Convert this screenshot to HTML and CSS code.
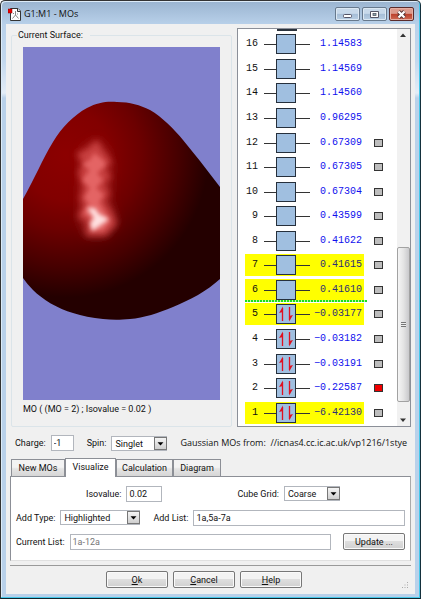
FILE: index.html
```html
<!DOCTYPE html>
<html lang="en">
<head>
<meta charset="utf-8">
<title>G1:M1 - MOs</title>
<link rel="stylesheet" href="styles.css">
</head>
<body>
<div class="window">
  <header class="titlebar">
    <svg class="app-icon" viewBox="0 0 13 13" width="13" height="13" aria-hidden="true">
      <path d="M2.500 .5H10L12.500 3V12.500H2.500Z" fill="#fff" stroke="#333"/>
      <path d="M9.500 .5V3.500H12.500" fill="#ddd" stroke="#333"/>
      <path d="M7.500 3V7L4.500 10.500M7.500 7L10.500 10.500M5 5.500H6M9 6H10" fill="none" stroke="#888"/>
      <rect x="0" y="1" width="4" height="4" fill="#e80000" stroke="#800" stroke-width=".5"/>
    </svg>
    <h1>G1:M1 - MOs</h1>
    <div class="window-buttons">
      <button type="button" aria-label="Minimize"><svg viewBox="0 0 11 9" width="11" height="9"><rect x="1.500" y="4.500" width="8" height="3" rx="1" fill="#fff" stroke="#556"/></svg></button>
      <button type="button" aria-label="Maximize"><svg viewBox="0 0 11 9" width="11" height="9"><path d="M1.500 1.500H9.500V7.500H1.500Z" fill="#fff" stroke="#556"/><rect x="4" y="3.500" width="3" height="2" fill="#8aa" stroke="#556" stroke-width=".8"/></svg></button>
      <button type="button" class="close" aria-label="Close"><svg viewBox="0 0 11 9" width="11" height="9"><path d="M2.500 1.500L8.500 7.500M8.500 1.500L2.500 7.500" stroke="#533" stroke-width="4"/><path d="M2.500 1.500L8.500 7.500M8.500 1.500L2.500 7.500" stroke="#fff" stroke-width="2.200"/></svg></button>
    </div>
  </header>

  <main class="client">
    <div class="top">
      <fieldset class="surface">
        <legend>Current Surface:</legend>
        <svg class="view" viewBox="23 47 197 353" preserveAspectRatio="xMidYMid slice" role="img" aria-label="Orbital surface">
          <defs>
            <radialGradient id="shade" gradientUnits="userSpaceOnUse" cx="66" cy="155" r="150">
              <stop offset="0" stop-color="#8c0000"/>
              <stop offset=".3" stop-color="#820000"/>
              <stop offset=".5" stop-color="#6c0000"/>
              <stop offset=".75" stop-color="#460000"/>
              <stop offset=".95" stop-color="#240000"/>
            </radialGradient>
            <filter id="wide" x="-50%" y="-50%" width="200%" height="200%"><feGaussianBlur stdDeviation="5"/></filter>
            <filter id="soft" x="-50%" y="-50%" width="200%" height="200%"><feGaussianBlur stdDeviation="3"/></filter>
            <filter id="fine" x="-50%" y="-50%" width="200%" height="200%"><feGaussianBlur stdDeviation="2"/></filter>
          </defs>
          <rect x="23" y="47" width="197" height="353" fill="#8080cc"/>
          <path fill="url(#shade)" d="M23 199C34 180 43 158 53 142C62 127 74 115 87 108C98 102 108 101 117 102C130 102 140 105 150 110C162 117 174 129 183 140L200 161L220 187V279C207 291 190 300 173 307C158 313 144 318 130 319C120 320 112 320 103 319C92 318 82 316 73 313C58 309 42 299 33 290Q27 284 23 278Z"/>
          <path filter="url(#wide)" fill="#b83434" fill-opacity=".6" d="M97 138L108 150L112 165L110 200L117 222L106 236H86L79 220L80 150Z"/>
          <path filter="url(#soft)" fill="#d85050" fill-opacity=".7" d="M97 140L102 150L112 162L104 168L111 177L103 184L110 194L104 201L112 212L117 224L106 236H86L87 221L77 217L84 206L80 198L84 188L78 172L84 164L76 154L88 149Z"/>
          <path filter="url(#fine)" fill="#f07474" fill-opacity=".7" d="M94 153L103 160L106 165L97 173L103 180L96 188L104 195L99 202L105 212L110 222L103 231H92L90 217L83 214L89 203L84 198L90 188L82 180L90 170L82 164L90 160Z"/>
          <path filter="url(#fine)" fill="#ffe0e0" d="M87 208L95 208L99 214L109 219L101 225L92 231L90 223L94 218Z"/>
        </svg>
        <p class="caption">MO ( (MO = 2) ; Isovalue = 0.02 )</p>
      </fieldset>

      <section class="orbitals" aria-label="Molecular orbitals">
        <ol class="levels" id="levels"></ol>
        <div class="scrollbar" aria-hidden="true">
          <svg viewBox="0 0 12 12" width="12" height="12"><path d="M3 8L6 4.500L9 8Z" fill="#333"/></svg>
          <div class="track"><div class="thumb"><i></i></div></div>
          <svg viewBox="0 0 12 12" width="12" height="12"><path d="M3 4.500L6 8L9 4.500Z" fill="#333"/></svg>
        </div>
      </section>
    </div>

    <div class="charge-row">
      <label for="charge">Charge:</label>
      <input id="charge" class="w-charge" type="text" value="-1">
      <label class="spin-label" for="spin">Spin:</label>
      <span class="select w-spin"><select id="spin"><option>Singlet</option></select><svg viewBox="0 0 13 13"><path d="M3 5H10L6.500 9Z"/></svg></span>
      <p class="source">Gaussian MOs from:&nbsp; //icnas4.cc.ic.ac.uk/vp1216/1stye</p>
    </div>

    <div class="tabs" role="tablist">
      <button type="button" role="tab" class="t-new">New MOs</button>
      <button type="button" role="tab" class="t-vis" aria-selected="true">Visualize</button>
      <button type="button" role="tab" class="t-calc">Calculation</button>
      <button type="button" role="tab" class="t-diag">Diagram</button>
    </div>
    <section class="panel" role="tabpanel">
      <div class="row row-iso">
        <label for="iso">Isovalue:</label>
        <input id="iso" class="w-iso" type="text" value="0.02">
        <label class="grid-label" for="cube">Cube Grid:</label>
        <span class="select w-spin"><select id="cube"><option>Coarse</option></select><svg viewBox="0 0 13 13"><path d="M3 5H10L6.500 9Z"/></svg></span>
      </div>
      <div class="row">
        <label for="type">Add Type:</label>
        <span class="select w-type"><select id="type"><option>Highlighted</option></select><svg viewBox="0 0 13 13"><path d="M3 5H10L6.500 9Z"/></svg></span>
        <label class="list-label" for="add">Add List:</label>
        <input id="add" class="grow" type="text" value="1a,5a-7a">
      </div>
      <div class="row">
        <label for="current">Current List:</label>
        <input id="current" class="grow" type="text" value="1a-12a" disabled>
        <button type="button" class="btn update">Update ...</button>
      </div>
    </section>

    <footer class="footer">
      <button type="button" class="btn"><u>O</u>k</button>
      <button type="button" class="btn"><u>C</u>ancel</button>
      <button type="button" class="btn"><u>H</u>elp</button>
      <svg class="grip" viewBox="0 0 7 7" width="7" height="7" aria-hidden="true"><path d="M5 0h1v1h-1zM2.500 2.500h1v1h-1zM5 2.500h1v1h-1zM0 5h1v1h-1zM2.500 5h1v1h-1zM5 5h1v1h-1z" fill="#aaa"/></svg>
    </footer>
  </main>
</div>
<script src="levels.js"></script>
</body>
</html>
```
FILE: styles.css
```css
* { box-sizing: border-box; }

body {
  margin: 0;
  font: 9px/14px Roboto, "Liberation Sans", sans-serif;
  color: #111;
}

h1, p, ol { margin: 0; padding: 0; font-weight: normal; }

button, input, select {
  font: inherit;
  color: inherit;
  margin: 0;
  padding: 0;
  border-radius: 0;
}

.window {
  display: flex;
  flex-direction: column;
  min-height: 100vh;
  padding: 0 5px 4px;
  border: 1px solid #333;
  border-right-color: #13303c;
  border-bottom-color: #10242c;
  border-radius: 5px 5px 0 0;
  background: linear-gradient(#9ab4d0, #b9d1ea 24px, #c3d8ee 60px, #e4edf7 92px, #b9d1ea 97px);
  box-shadow: inset -1px -1px #45c8ea, inset 1px 1px #dcebf8;
}

.titlebar {
  display: flex;
  align-items: flex-end;
  height: 23px;
  padding: 0 1px 3px 2px;
}

.titlebar h1 {
  flex: 1;
  margin-left: 3px;
  font: 9px/14px "Open Sans", sans-serif;
}

.app-icon { flex: none; }

.window-buttons { display: flex; gap: 2px; }

.window-buttons button {
  display: flex;
  align-items: center;
  justify-content: center;
  width: 25px;
  height: 14px;
  border: 1px solid #67798d;
  border-radius: 2px;
  background: linear-gradient(#c8d9ea 45%, #a5bdd6 50%, #b9cfe4);
  box-shadow: inset 0 0 0 1px #dce8f3;
}

.window-buttons .close {
  border-color: #5a2b2b;
  background: linear-gradient(#dc9a8c 45%, #bb3f2a 50%, #cf6b55);
  box-shadow: inset 0 0 0 1px #e6aea2;
}

.client {
  display: flex;
  flex: 1;
  flex-direction: column;
  padding: 4px 4px 5px 4px;
  background: #f0f0f0;
}

.top { display: flex; flex: 1; gap: 5px; }

.surface {
  display: flex;
  flex: 1;
  flex-direction: column;
  min-width: 0;
  margin: 0 0 0 1px;
  padding: 5px 11px 10px;
  border: 1px solid #dbe4e9;
  border-radius: 2px;
}

.surface legend { margin-left: -6px; padding: 1px 7px 0 1px; line-height: 13px; }

.view { display: block; flex: 1 1 0; width: 100%; min-height: 0; }

.caption { margin-top: 3px; line-height: 13px; }

.orbitals {
  display: flex;
  flex: none;
  width: 174px;
  border: 1px solid #8b8f98;
  background: #fff;
}

.levels {
  display: flex;
  flex: 1;
  flex-direction: column;
  padding-bottom: 1px;
  list-style: none;
}

.level {
  display: flex;
  flex: 1;
  align-items: center;
  gap: 10px;
  padding-left: 7px;
}

.peek { height: 3px; padding-left: 39px; flex: none; overflow: hidden; }
.peek::before { content: ""; display: block; width: 20px; height: 2px; background: #2a323c; }

.entry {
  display: flex;
  align-items: center;
  width: 119px;
  height: 22px;
  font: 10px/22px "Liberation Mono", monospace;
}

.entry.marked { background: #ff0; }

.number { width: 13px; text-align: right; }

.energy { flex: 1; padding-right: 2px; text-align: right; color: #1010ee; }

.marked .energy { color: #2d2d78; }

.orbital { width: 46px; height: 20px; margin-left: 6px; flex: none; }

.fermi {
  height: 2px;
  width: 122px;
  margin: -2px 0 0 7px;
  background: repeating-linear-gradient(90deg, #1be01b 0 2px, #c8f8a0 2px 3px);
}

.mark {
  appearance: none;
  width: 9px;
  height: 8px;
  margin: 0;
  border: 1px solid #333;
  background: #bdbdbd;
}

.mark:checked { background: #f00000; }

.scrollbar {
  display: flex;
  flex-direction: column;
  width: 13px;
  background: #f1f1f1;
}

.track {
  display: flex;
  flex: 1;
  flex-direction: column;
  justify-content: flex-end;
  padding-bottom: 12px;
}

.thumb {
  display: flex;
  align-items: center;
  justify-content: center;
  height: 43%;
  border: 1px solid #a2a2a2;
  border-radius: 2px;
  background: linear-gradient(90deg, #f5f5f5, #e4e4e4 50%, #c9c9cc);
}

.thumb i { width: 5px; height: 5px; background: repeating-linear-gradient(#777 0 1px, #eee 1px 2px); }

.charge-row {
  display: flex;
  align-items: center;
  height: 16px;
  margin: 8px 0 7px 5px;
}

.charge-row label, .row label { margin-right: 5px; white-space: nowrap; }

input[type="text"] {
  height: 16px;
  padding: 0 2px;
  border: 1px solid #b2b6bd;
  background: #fff;
}

input:disabled { color: #777; }

.w-charge { width: 23px; }
.w-iso { width: 36px; }
.w-spin { width: 56px; }
.w-type { width: 80px; }
.grow { flex: 1; min-width: 0; }

.charge-row .spin-label { margin-left: 13px; }

.source {
  margin-left: 13px;
  font: 9px/14px "Open Sans", sans-serif;
  white-space: nowrap;
}

.select { position: relative; flex: none; height: 15px; }

.select select {
  display: block;
  appearance: none;
  width: 100%;
  height: 100%;
  padding: 0 14px 0 3px;
  border: 1px solid #b2b6bd;
  background: #fff;
}

.select svg {
  position: absolute;
  top: 1px;
  right: 0;
  width: 13px;
  height: 13px;
  border: 1px solid #777;
  background: linear-gradient(#f4f4f4, #cfcfcf);
  pointer-events: none;
}

.tabs { display: flex; align-items: flex-end; }

.tabs button {
  height: 17px;
  border: 1px solid #8c8f96;
  border-bottom: 0;
  background: linear-gradient(#f3f3f3 45%, #e4e4e4 55%, #d6d6d6);
}

.tabs [aria-selected] { height: 19px; margin-bottom: -1px; padding-bottom: 2px; background: #fff; position: relative; }

.t-new { width: 54px; margin-left: 1px; }
.t-vis { width: 51px; }
.t-calc { width: 57px; }
.t-diag { width: 48px; }

.panel {
  display: flex;
  flex-direction: column;
  gap: 7px;
  padding: 8px 5px 10px;
  border: 1px solid #8c8f96;
  border-right-color: #aaa;
  border-bottom-color: #e0e0e0;
  background: #fff;
}

.row { display: flex; align-items: center; height: 17px; }

.row-iso { padding-left: 70px; }

.row .grid-label { margin-left: 75px; }
.row .list-label { margin-left: 13px; }

.btn {
  width: 62px;
  height: 17px;
  border: 1px solid #777;
  border-radius: 2px;
  background: linear-gradient(#f3f3f3 45%, #dedede 50%, #d0d0d0);
  box-shadow: inset 0 0 0 1px #fafafa;
}

.update { margin-left: 12px; }

.footer {
  display: flex;
  justify-content: center;
  position: relative;
  gap: 5px;
  margin-top: 4px;
  padding: 5px 13px 1px 0;
  border-top: 1px solid #9a9a9a;
}

.grip { position: absolute; right: 2px; bottom: 0; }
```
FILE: levels.js
```js
// Orbital energies, highest first: [number, energy, highlighted, surface state]
const levels = [
  [16, "1.14583", false, null],
  [15, "1.14569", false, null],
  [14, "1.14560", false, null],
  [13, "0.96295", false, null],
  [12, "0.67309", false, false],
  [11, "0.67305", false, false],
  [10, "0.67304", false, false],
  [9, "0.43599", false, false],
  [8, "0.41622", false, false],
  [7, "0.41615", true, false],
  [6, "0.41610", true, false],
  [5, "-0.03177", true, false],
  [4, "-0.03182", false, false],
  [3, "-0.03191", false, false],
  [2, "-0.22587", false, true],
  [1, "-6.42130", true, false]
];

const arrows = '<path d="M18.500 17V4M25.500 3V16" fill="none" stroke="#e01020" stroke-width="1.300"/>' +
  '<path d="M19 2.500V8L15 9ZM25 17.500V12L29 11Z" fill="#e01020"/>';

const rows = levels.map(([n, energy, marked, shown]) => {
  const occupied = n <= 5;
  const fermi = n === 5 ? '<li class="fermi"></li>' : '';
  const box = '<svg class="orbital" viewBox="0 0 46 20" aria-hidden="true">' +
    '<path d="M0 10.500H46" stroke="#333"/>' +
    '<rect x="12.500" y=".5" width="19" height="19" fill="#a0bfe0" stroke="#26303c"/>' +
    (occupied ? arrows : '') + '</svg>';
  const mark = shown === null ? '' :
    `<input class="mark" type="checkbox" aria-label="Surface ${n}"${shown ? ' checked' : ''}>`;
  return `${fermi}<li class="level"><div class="entry${marked ? ' marked' : ''}">` +
    `<span class="number">${n}</span>${box}<span class="energy">${energy.replace('-', '\u2212')}</span></div>${mark}</li>`;
});

document.getElementById('levels').innerHTML = '<li class="peek"></li>' + rows.join('');
```
